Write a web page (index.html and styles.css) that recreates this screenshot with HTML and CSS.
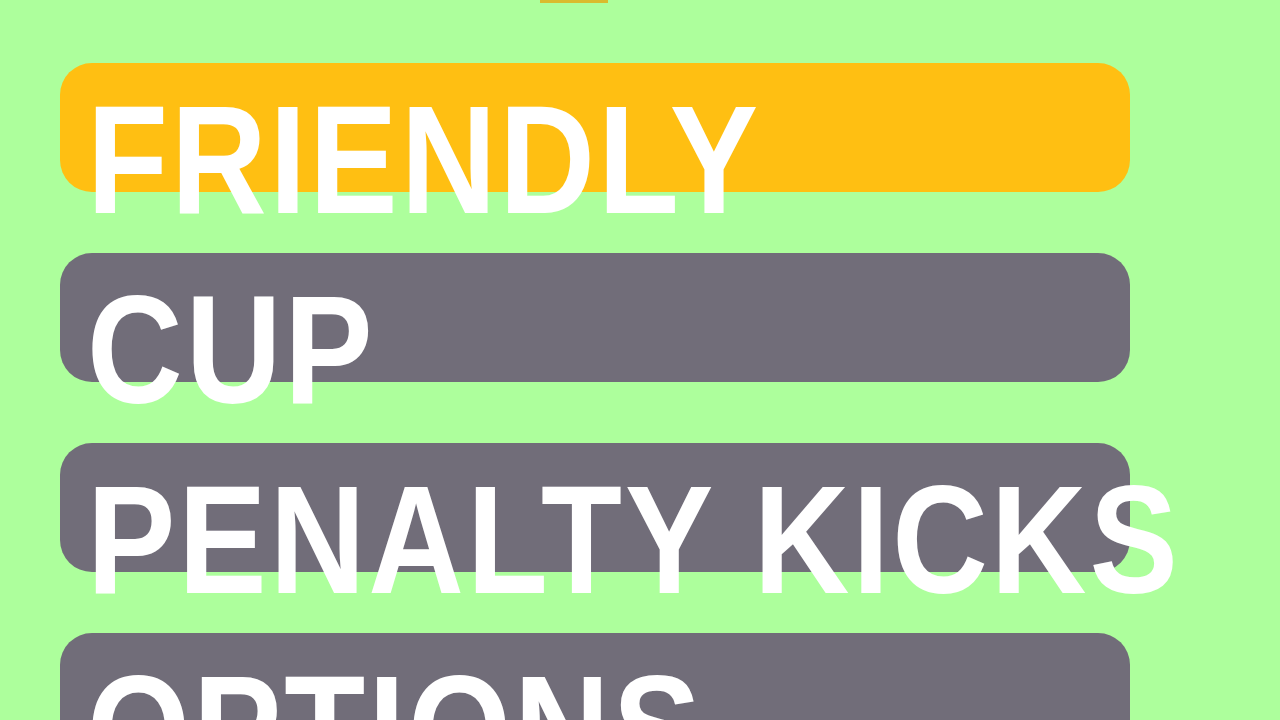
FILE: index.html
```html
<!DOCTYPE html>
<html>
<head>
<meta charset="utf-8">
<link rel="stylesheet" href="styles.css">
</head>
<body>
<div class="screen">
  <div class="logo-tip"></div>
  <nav class="menu">
    <div class="item active"><span class="label">FRIENDLY</span></div>
    <div class="item"><span class="label">CUP</span></div>
    <div class="item"><span class="label">PENALTY KICKS</span></div>
    <div class="item"><span class="label">OPTIONS</span></div>
  </nav>
</div>
</body>
</html>
```
FILE: styles.css
```css
html, body {
  margin: 0;
  padding: 0;
  background: #adff9c;
  overflow: hidden;
}
.screen {
  width: 1280px;
  height: 720px;
  position: relative;
  overflow: hidden;
}
.logo-tip {
  position: absolute;
  left: 540px;
  top: 0;
  width: 68px;
  height: 3px;
  background: #d9bc2e;
}
.menu {
  display: flex;
  flex-direction: column;
  gap: 61px;
  padding: 63px 0 0 60px;
}
.item {
  width: 1070px;
  height: 129px;
  box-sizing: border-box;
  border-radius: 32px;
  background: #716d79;
  padding: 20px 0 0 27px;
  flex: none;
}
.item.active {
  background: #ffbf12;
}
.label {
  display: inline-block;
  font-family: "Liberation Sans", Arial, sans-serif;
  font-weight: bold;
  font-size: 154px;
  line-height: 154px;
  letter-spacing: 3.5px;
  color: #ffffff;
  white-space: nowrap;
  transform: scaleX(0.86);
  transform-origin: left top;
}
```
